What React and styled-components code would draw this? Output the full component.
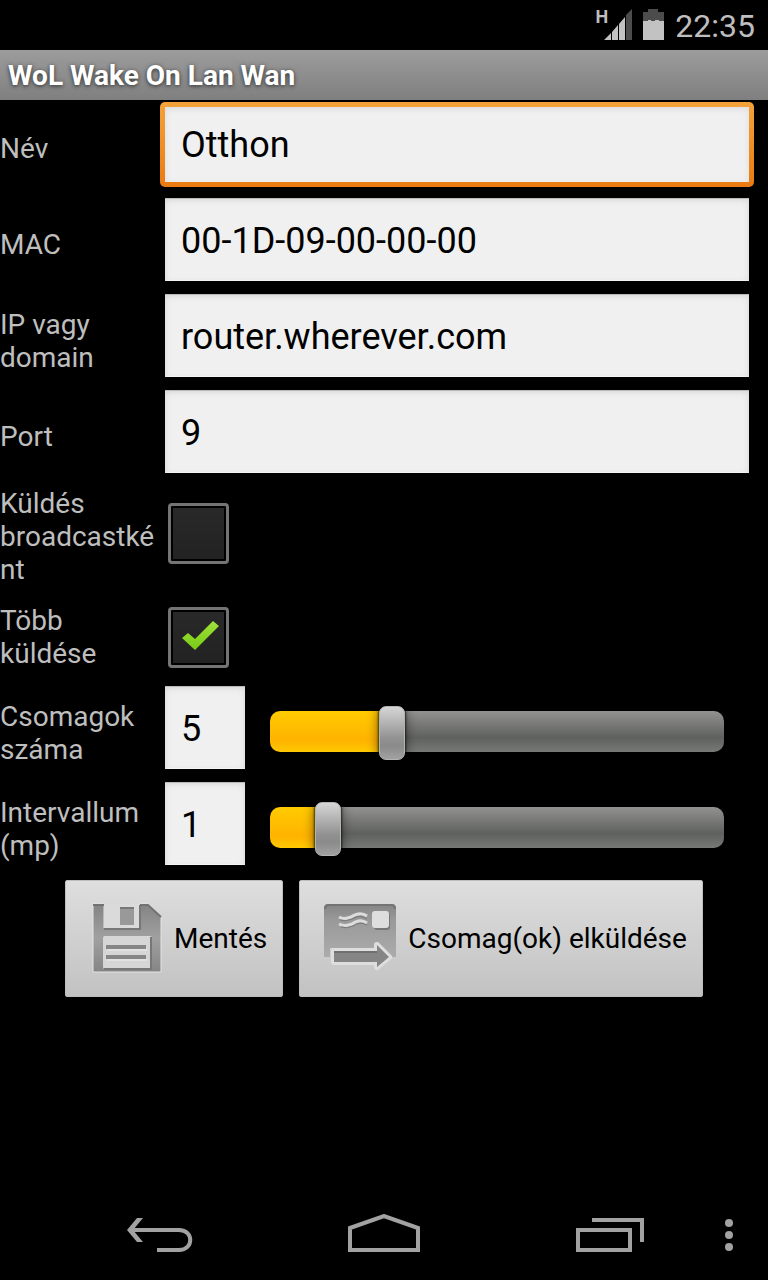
import React, { useState } from "react";
import styled, { createGlobalStyle } from "styled-components";

const GlobalStyle = createGlobalStyle`
  * {
    box-sizing: border-box;
  }

  body {
    margin: 0;
    background: #000;
    font-family: Roboto, "Noto Sans", sans-serif;
  }

  button,
  input {
    font-family: inherit;
  }
`;

const Screen = styled.div`
  display: flex;
  flex-direction: column;
  min-height: 100vh;
  color: #bebebe;
`;

const StatusBar = styled.header`
  display: flex;
  justify-content: flex-end;
  align-items: center;
  height: 50px;
  padding-right: 13px;
`;

const Network = styled.span`
  align-self: flex-start;
  padding-top: 7px;
  font-family: "Liberation Sans Narrow", Roboto, sans-serif;
  font-size: 18px;
  line-height: 20px;
  font-weight: 700;
  margin-right: -4px;
`;

const StatusIcon = styled.svg`
  display: block;
  margin-right: 11px;
`;

const Clock = styled.time`
  padding-top: 2px;
  font-size: 32px;
  line-height: 36px;
`;

const TitleBar = styled.h1`
  margin: 0;
  padding: 2px 8px 0;
  font-size: 28px;
  line-height: 48px;
  font-weight: 700;
  color: #fff;
  text-shadow: 0 1px 4px rgba(0, 0, 0, 0.7);
  background: linear-gradient(#9c9c9c, #7f7f7f);
`;

const Form = styled.form`
  display: flex;
  flex-direction: column;
`;

const Row = styled.div`
  display: grid;
  grid-template-columns: 165px 1fr;
  min-height: 96px;
  padding-right: 19px;
`;

const Label = styled.label`
  align-self: center;
  padding: 3px 8px 2px 0;
  font-size: 28px;
  line-height: 33px;
  overflow-wrap: anywhere;
`;

const Controls = styled.div`
  display: flex;
  align-items: flex-start;
  padding-top: 2px;
`;

const TextInput = styled.input`
  flex: ${props => (props.$short ? "0 0 80px" : "1")};
  min-width: 0;
  height: 83px;
  padding: 2px 16px 0;
  border: 0;
  outline: 0;
  font-size: 36px;
  color: #000;
  background: #f0f0f0;
  box-shadow: inset 0 1px 0 #bbb, inset 0 2px 6px #d4d4d4,
    inset 0 -1px 0 #fff;
`;

const FocusRing = styled.div`
  display: flex;
  flex: 1;
  margin: 0 -5px;
  padding: 5px;
  border-radius: 5px;
  background: linear-gradient(#f3a33a, #ea7a12);

  ${TextInput} {
    height: 75px;
    padding-top: 0;
    box-shadow: inset 0 2px 6px #dcdcdc;
  }
`;

const CheckWrap = styled.div`
  position: relative;
  margin: 17px 3px 0;
  width: 61px;
  height: 61px;
`;

const Check = styled.input`
  appearance: none;
  display: block;
  width: 100%;
  height: 100%;
  margin: 0;
  border: 3px solid #747474;
  border-radius: 4px;
  background: linear-gradient(#292929, #222);
  box-shadow: inset 0 0 0 2px #000;
`;

const CheckMark = styled.svg`
  position: absolute;
  inset: 0;
  pointer-events: none;
`;

const Slider = styled.input`
  appearance: none;
  flex: 1;
  min-width: 0;
  height: 54px;
  margin: 18px 25px 0;
  background: none;

  &::-webkit-slider-runnable-track {
    height: 41px;
    border-radius: 10px;
    background: linear-gradient(#ffcb00, #ffb300 70%, #ffc800) 0 0 /
        var(--fill) 100% no-repeat,
      linear-gradient(#929290, #5f615e 65%, #777976);
  }

  &::-webkit-slider-thumb {
    appearance: none;
    width: 26px;
    height: 54px;
    margin-top: -5px;
    border: 1px solid #b4b4b4;
    border-radius: 7px;
    background: linear-gradient(#d6d6d6, #929292 60%, #8a8a8a 75%, #a2a2a2);
    box-shadow: 0 0 2px 1px rgba(0, 0, 0, 0.6), 0 0 12px rgba(0, 0, 0, 0.6);
  }
`;

const Actions = styled.div`
  display: flex;
  justify-content: center;
  gap: 16px;
  padding: 4px 0;
`;

const ActionButton = styled.button`
  display: flex;
  align-items: center;
  gap: 12px;
  height: 117px;
  padding: 0 15px 0 24px;
  border: 1px solid #bdbdbd;
  border-radius: 2px;
  font-size: 28px;
  line-height: 33px;
  white-space: nowrap;
  color: #000;
  background: linear-gradient(#dedede, #c2c2c2);
`;

const NavBar = styled.nav`
  display: flex;
  height: 90px;
  margin-top: auto;
  padding: 0 24px 0 48px;
`;

const NavButton = styled.button`
  display: flex;
  flex: ${props => (props.$menu ? "0 0 24px" : "1")};
  justify-content: ${props => (props.$menu ? "flex-start" : "center")};
  align-items: center;
  padding: 0;
  border: 0;
  background: none;
  color: #a2a2a2;
`;

const SaveIcon = () => (
  <svg width="72" height="72" viewBox="0 1 72 72" aria-hidden="true">
    <defs>
      <linearGradient id="save" x1="0" y1="0" x2="0" y2="1">
        <stop offset="0" stopColor="#838383" />
        <stop offset="0.5" stopColor="#a0a0a0" />
        <stop offset="1" stopColor="#858585" />
      </linearGradient>
    </defs>
    <path
      d="M3 2H14V26H50V2H58L71 15V70H3Z"
      fill="url(#save)"
      stroke="#e4e4e4"
      strokeWidth="1"
    />
    <path d="M3 3H14M50 3H58L71 15" fill="none" stroke="#727272" strokeWidth="2" />
    <path d="M14 27H50V3" fill="none" stroke="#777" strokeWidth="2" />
    <rect x="14" y="2" width="35" height="24" fill="#dadada" />
    <rect x="30" y="5" width="14" height="18" fill="#999" />
    <path d="M30 6H44" stroke="#777" strokeWidth="2" />
    <rect x="13" y="34" width="49" height="33" rx="2" fill="#d6d6d6" />
    <path d="M14 67H61V35" fill="none" stroke="#777" strokeWidth="2" />
    <path d="M16 45H56M16 55H56" stroke="#868686" strokeWidth="4" />
    <path d="M17 48H57M17 58H57" stroke="#eee" strokeWidth="1" />
  </svg>
);

const SendIcon = () => (
  <svg width="72" height="72" viewBox="0 1 72 72" aria-hidden="true">
    <defs>
      <linearGradient id="card" x1="0" y1="0" x2="0" y2="1">
        <stop offset="0" stopColor="#858585" />
        <stop offset="0.3" stopColor="#999" />
        <stop offset="1" stopColor="#acacac" />
      </linearGradient>
    </defs>
    <path
      d="M4 2H68Q72 2 72 6V55H60L54 42L49 46H6V55H0V6Q0 2 4 2Z"
      fill="url(#card)"
    />
    <path d="M1 7Q1 3 5 3H67Q71 3 71 7" fill="none" stroke="#747474" strokeWidth="2" />
    <path
      d="M15 15Q20 18 27 15Q36 9 43 14M15 22Q21 25 28 22Q36 16 43 21"
      fill="none"
      stroke="#dcdcdc"
      strokeWidth="3"
    />
    <path
      d="M16 18Q21 20 28 17Q36 12 43 17M17 25Q22 27 29 24Q36 19 43 23"
      fill="none"
      stroke="#777"
      strokeWidth="1"
    />
    <rect x="50" y="10" width="16" height="18" rx="3" fill="#777" />
    <rect x="48" y="9" width="17" height="17" rx="3" fill="#dedede" />
    <path
      d="M10 49H53V43L65 55L53 65V60H10Z"
      fill="#858585"
      stroke="#dedede"
      strokeWidth="6"
      paintOrder="stroke"
      strokeLinejoin="round"
    />
    <path d="M10 50H53" stroke="#6f6f6f" strokeWidth="2" />
  </svg>
);

const BackIcon = () => (
  <svg width="66" height="36" viewBox="0 0 66 36" fill="none" aria-hidden="true">
    <path
      d="M4 13H52C67 13 67 33 52 33H30"
      stroke="currentColor"
      strokeWidth="4"
    />
    <path d="M10 1H16L6 13L16 25H10L0 13Z" fill="currentColor" />
  </svg>
);

const HomeIcon = () => (
  <svg width="72" height="42" viewBox="0 2 72 42" fill="none" aria-hidden="true">
    <path
      d="M2 16L36 4L70 16V38H2Z"
      stroke="currentColor"
      strokeWidth="4"
    />
  </svg>
);

const RecentIcon = () => (
  <svg width="72" height="34" viewBox="-4 0 72 34" fill="none" aria-hidden="true">
    <path
      d="M2 12H54V32H2ZM16 2H66V24"
      stroke="currentColor"
      strokeWidth="4"
    />
  </svg>
);

const MenuIcon = () => (
  <svg width="18" height="34" viewBox="0 0 18 34" fill="currentColor" aria-hidden="true">
    <circle cx="9" cy="5" r="4" />
    <circle cx="9" cy="17" r="4" />
    <circle cx="9" cy="29" r="4" />
  </svg>
);

const TextRow = ({ id, label, value, onChange, focused }) => {
  const input = (
    <TextInput id={id} type="text" value={value} onChange={onChange} />
  );
  return (
    <Row>
      <Label htmlFor={id}>{label}</Label>
      <Controls>{focused ? <FocusRing>{input}</FocusRing> : input}</Controls>
    </Row>
  );
};

const CheckRow = ({ id, label, checked, onChange }) => (
  <Row>
    <Label htmlFor={id}>{label}</Label>
    <Controls>
      <CheckWrap>
        <Check id={id} type="checkbox" checked={checked} onChange={onChange} />
        {checked && (
          <CheckMark viewBox="0 0 61 61" aria-hidden="true">
            <defs>
              <linearGradient id="tick" x1="0" y1="0" x2="0" y2="1">
                <stop offset="0" stopColor="#a0e03c" />
                <stop offset="1" stopColor="#78cc14" />
              </linearGradient>
            </defs>
            <path d="M14 31L20 26L27 32L45 14L51 19L27 43Z" fill="url(#tick)" />
          </CheckMark>
        )}
      </CheckWrap>
    </Controls>
  </Row>
);

const SliderRow = ({ id, label, value, onChange, level, onLevel }) => (
  <Row>
    <Label htmlFor={id}>{label}</Label>
    <Controls>
      <TextInput $short id={id} type="text" value={value} onChange={onChange} />
      <Slider
        type="range"
        aria-label={label}
        min="0"
        max="200"
        value={level}
        onChange={onLevel}
        style={{ "--fill": `calc(13px + (100% - 26px) * ${level / 200})` }}
      />
    </Controls>
  </Row>
);

const App = () => {
  const [fields, setFields] = useState({
    name: "Otthon",
    mac: "00-1D-09-00-00-00",
    host: "router.wherever.com",
    port: "9",
    broadcast: false,
    multiple: true,
    packets: "5",
    packetsLevel: 51,
    interval: "1",
    intervalLevel: 21
  });

  const onText = e => {
    setFields({ ...fields, [e.target.id]: e.target.value });
  };

  const onCheck = e => {
    setFields({ ...fields, [e.target.id]: e.target.checked });
  };

  return (
    <Screen>
      <GlobalStyle />
      <StatusBar>
        <Network>H</Network>
        <StatusIcon width="28" height="32" viewBox="0 1 28 32" aria-hidden="true">
          <path d="M0 32L7 25V32ZM8 24L14 17V32H8ZM15 16L21 9V32H15Z" fill="#c2c2c2" />
          <path d="M22 7L28 1V32H22Z" fill="#4c4c4c" />
        </StatusIcon>
        <StatusIcon width="21" height="32" viewBox="0 0 21 32" aria-hidden="true">
          <path d="M5 0H15V3H21V14H0V3H5Z" fill="#4c4c4c" />
          <path d="M0 12H5V11H8V12H12V11H16V12H21V31H0Z" fill="#c2c2c2" />
        </StatusIcon>
        <Clock>22:35</Clock>
      </StatusBar>
      <TitleBar>WoL Wake On Lan Wan</TitleBar>
      <Form onSubmit={e => e.preventDefault()}>
        <TextRow id="name" label="Név" value={fields.name} onChange={onText} focused />
        <TextRow id="mac" label="MAC" value={fields.mac} onChange={onText} />
        <TextRow id="host" label="IP vagy domain" value={fields.host} onChange={onText} />
        <TextRow id="port" label="Port" value={fields.port} onChange={onText} />
        <CheckRow
          id="broadcast"
          label="Küldés broadcastként"
          checked={fields.broadcast}
          onChange={onCheck}
        />
        <CheckRow
          id="multiple"
          label="Több küldése"
          checked={fields.multiple}
          onChange={onCheck}
        />
        <SliderRow
          id="packets"
          label="Csomagok száma"
          value={fields.packets}
          onChange={onText}
          level={fields.packetsLevel}
          onLevel={e => setFields({ ...fields, packetsLevel: e.target.value })}
        />
        <SliderRow
          id="interval"
          label="Intervallum (mp)"
          value={fields.interval}
          onChange={onText}
          level={fields.intervalLevel}
          onLevel={e => setFields({ ...fields, intervalLevel: e.target.value })}
        />
        <Actions>
          <ActionButton type="submit">
            <SaveIcon />
            Mentés
          </ActionButton>
          <ActionButton type="button">
            <SendIcon />
            Csomag(ok) elküldése
          </ActionButton>
        </Actions>
      </Form>
      <NavBar>
        <NavButton aria-label="Vissza">
          <BackIcon />
        </NavButton>
        <NavButton aria-label="Kezdőlap">
          <HomeIcon />
        </NavButton>
        <NavButton aria-label="Legutóbbi">
          <RecentIcon />
        </NavButton>
        <NavButton $menu aria-label="Menü">
          <MenuIcon />
        </NavButton>
      </NavBar>
    </Screen>
  );
};

export default App;
